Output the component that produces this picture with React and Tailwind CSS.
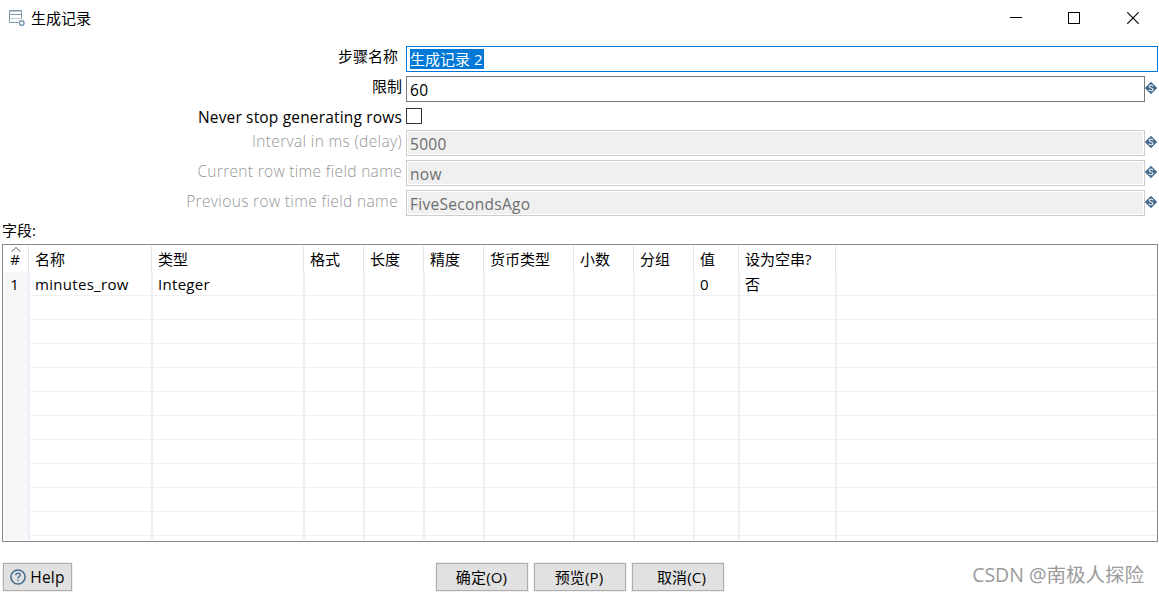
import { useState } from "react";

const columns = [
  { key: "name", title: "名称", width: "w-[123px]" },
  { key: "type", title: "类型", width: "w-[152px]" },
  { key: "format", title: "格式", width: "w-[60px]" },
  { key: "length", title: "长度", width: "w-[60px]" },
  { key: "precision", title: "精度", width: "w-[60px]" },
  { key: "currency", title: "货币类型", width: "w-[90px]" },
  { key: "decimal", title: "小数", width: "w-[60px]" },
  { key: "group", title: "分组", width: "w-[60px]" },
  { key: "value", title: "值", width: "w-[45px]" },
  { key: "empty", title: "设为空串?", width: "w-[97px]" },
];

const rows = [
  { name: "minutes_row", type: "Integer", value: "0", empty: "否" },
  {}, {}, {}, {}, {}, {}, {}, {}, {}, {},
];

const StepIcon = () => (
  <svg className="h-[18px] w-[18px] shrink-0" viewBox="0 0 18 18" fill="none">
    <path d="M10 13.5H1.5v-12h12v8" stroke="#7b98ab" />
    <path d="M1.5 2h12M1.5 5.5h12" stroke="#7b98ab" />
    <path d="M2 9.5h11" stroke="#c3d0d8" />
    <circle cx="13.7" cy="14" r="2.2" stroke="#7b98ab" strokeWidth="1.3" />
    <path d="M13.7 10.7v1M13.7 16.3v1M10.4 14h1M16 14h1M11.4 11.7l.7.7M15.3 15.6l.7.7M16 11.7l-.7.7M12.1 15.6l-.7.7" stroke="#7b98ab" strokeWidth="1.2" />
  </svg>
);

const VariableIcon = () => (
  <svg className="h-3 w-3 shrink-0" viewBox="0 0 12 12">
    <path d="M6 0L12 6L6 12L0 6Z" fill="#44698a" stroke="#44698a" strokeWidth="0.4" />
    <path d="M8 4.3C7.6 2.7 4.2 2.8 4.2 4.5C4.2 6.3 8 5.6 8 7.4C8 9.2 4.4 9.2 4 7.6" fill="none" stroke="#e3ebf0" strokeWidth="1.1" />
  </svg>
);

const TitleBar = () => (
  <header className="flex h-[46px] items-start">
    <div className="flex h-9 flex-1 items-center gap-[5px] pl-2">
      <StepIcon />
      <h1 className="text-[15px] leading-5">生成记录</h1>
    </div>
    <div className="flex h-9 items-center pr-5">
      <svg className="mr-[46px] h-3 w-3" viewBox="0 0 12 12" shapeRendering="crispEdges">
        <path d="M0 5.5h12" stroke="#000" />
      </svg>
      <svg className="mr-[47px] h-3 w-3" viewBox="0 0 12 12" shapeRendering="crispEdges">
        <rect x="0.5" y="0.5" width="11" height="11" fill="none" stroke="#000" />
      </svg>
      <svg className="h-3 w-3" viewBox="0 0 12 12">
        <path d="M0.3 0.3L11.7 11.7M11.7 0.3L0.3 11.7" stroke="#000" strokeWidth="1.1" />
      </svg>
    </div>
  </header>
);

const Label = ({ children, className }) => (
  <label className={`w-[406px] shrink-0 whitespace-nowrap text-right ${className}`}>
    {children}
  </label>
);

const VariableField = ({ label, labelClass, value, disabled }) => (
  <div className="mb-1 flex h-[26px]">
    <Label className={labelClass}>{label}</Label>
    <div className={`flex w-[739px] items-center border px-[3px] pt-px text-[15.5px] tracking-[0.3px] ${disabled ? "border-[#cccccc] bg-[#f0f0f0] text-[#6d6d6d] shadow-[inset_0_0_0_1px_#fff]" : "border-[#7a7a7a] bg-white"}`}>
      {value}
    </div>
    <div className="-mt-[2px] flex items-center">
      <VariableIcon />
    </div>
  </div>
);

const FieldsTable = () => (
  <div className="mx-[2px] mr-px h-[298px] overflow-hidden border border-[#828790] p-px">
    <div className="flex h-[26px]">
      <div className="flex w-[25px] flex-col items-center border-r border-[#e5e5e5]">
        <svg className="mt-px h-[5px] w-[10px] shrink-0" viewBox="0 0 10 5" fill="none">
          <path d="M0.5 4.7L5 0.5L9.5 4.7" stroke="#606060" />
        </svg>
        <span className="pr-[2px] text-[15px] leading-[15px]">#</span>
      </div>
      {columns.map((col) => (
        <div key={col.key} className={`flex shrink-0 items-center border-r border-[#e5e5e5] pl-[6px] ${col.width}`}>
          {col.title}
        </div>
      ))}
    </div>
    <div className="h-[268px] overflow-hidden">
      {rows.map((row, i) => (
        <div key={i} className="flex h-6 border-b border-[#f0f0f0]">
          <div className="box-content h-6 w-[21px] shrink-0 border-r-2 border-[#e9eef8] bg-[#f7f7f7] pr-[3px] text-center leading-6">
            {i === 0 && "1"}
          </div>
          {columns.map((col) => (
            <div key={col.key} className={`h-6 shrink-0 whitespace-nowrap border-r-2 border-[#edf0f7] pl-[5px] leading-6 tracking-[0.3px] ${col.width}`}>
              {row[col.key]}
            </div>
          ))}
        </div>
      ))}
      <div className="flex h-1">
        <div className="box-content w-6 shrink-0 border-r-2 border-[#e9eef8] bg-[#f7f7f7]" />
        {columns.map((col) => (
          <div key={col.key} className={`shrink-0 border-r-2 border-[#edf0f7] ${col.width}`} />
        ))}
      </div>
    </div>
  </div>
);

const Button = ({ children, className }) => (
  <button className={`flex h-[28px] items-center justify-center whitespace-nowrap border border-[#adadad] bg-[#e1e1e1] shadow-[0_0_0_1px_#f0f0f0] ${className}`}>
    {children}
  </button>
);

const App = () => {
  const [stepName] = useState("生成记录 2");
  const [neverEnding, setNeverEnding] = useState(false);

  return (
    <div className="flex h-[595px] w-[1159px] flex-col overflow-hidden bg-white font-['Open_Sans','Noto_Sans_CJK_SC',sans-serif] text-[15px] leading-[22px] text-black">
      <TitleBar />
      <div className="h-[174px]">
        <div className="mb-1 flex h-[26px]">
          <Label className="pr-2 leading-5">步骤名称</Label>
          <div className="flex w-[752px] items-center border border-[#0078d7] pl-[3px]">
            <span className="h-5 bg-[#0078d7] pr-[2px] leading-5 text-white">{stepName}</span>
          </div>
        </div>
        <VariableField label="限制" labelClass="pr-1 leading-5" value="60" />
        <div className="mb-1 flex h-5 items-center">
          <Label className="pr-1 pt-px text-[15.5px] tracking-[0.17px]">Never stop generating rows</Label>
          <input
            type="checkbox"
            className="h-4 w-4 appearance-none border border-[#333333] bg-white"
            checked={neverEnding}
            onChange={(e) => setNeverEnding(e.target.checked)}
          />
        </div>
        <VariableField label="Interval in ms (delay)" labelClass="pr-1 text-[15.5px] leading-[22px] tracking-[0.35px] font-light text-[#969696]" value="5000" disabled />
        <VariableField label="Current row time field name" labelClass="pr-1 text-[15.5px] leading-[22px] tracking-[0.32px] font-light text-[#969696]" value="now" disabled />
        <VariableField label="Previous row time field name" labelClass="pr-2 text-[15.5px] leading-[22px] tracking-[0.35px] font-light text-[#969696]" value="FiveSecondsAgo" disabled />
      </div>
      <div className="h-6 pl-[2px] leading-5">字段:</div>
      <FieldsTable />
      <footer className="mt-[21px] flex items-start">
        <Button className="ml-[3px] w-[69px] gap-[4px] text-[15.5px] tracking-[0.2px]">
          <svg className="h-4 w-4" viewBox="0 0 16 16" fill="none">
            <circle cx="8" cy="8" r="7.1" stroke="#41698a" strokeWidth="1.5" />
            <path d="M5.8 6.2C5.8 3.4 10.2 3.5 10.2 6C10.2 7.6 8 7.6 8 9.6M8 10.8V12.2" stroke="#41698a" strokeWidth="1.4" />
          </svg>
          Help
        </Button>
        <Button className="ml-[364px] w-[92px] pr-px tracking-[0.15px]">确定(O)</Button>
        <Button className="ml-[6px] w-[92px] pr-[2px] tracking-[0.15px]">预览(P)</Button>
        <Button className="ml-[6px] w-[92px] pl-[7px] tracking-[0.15px]">取消(C)</Button>
        <span className="ml-auto mr-[15px] whitespace-nowrap text-[19.5px] leading-6 text-[#9b9b9b]">CSDN @南极人探险</span>
      </footer>
    </div>
  );
};

export default App;
